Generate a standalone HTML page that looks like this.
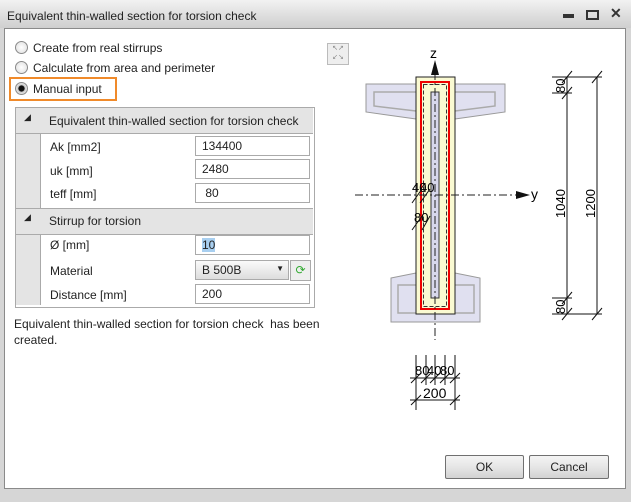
<!DOCTYPE html>
<html><head><style>
body{margin:0;width:631px;height:502px;background:#d6d6d6;font-family:"Liberation Sans",sans-serif;font-size:12px;color:#222;position:relative;overflow:hidden}
.abs{position:absolute}
.title{left:0;top:0;width:631px;height:28px;background:linear-gradient(#f2f2f2,#dcdcdc 60%,#cfcfcf);}
.client{left:4px;top:28px;width:620px;height:459px;background:#fff;border:1px solid #8a8a8a}
.radio{width:11px;height:11px;border-radius:50%;border:1px solid #8a8a8a;background:radial-gradient(#fff,#ddd)}
.inp{background:#fff;border:1px solid #aaa;height:20px;box-sizing:border-box;padding:2px 6px;font-size:12px}
.btn{border:1px solid #707070;border-radius:2px;background:linear-gradient(#f4f4f4,#e6e6e6 50%,#d2d2d2);text-align:center;line-height:22px;height:22px}
</style></head><body>
<div class="abs title"></div>
<div class="abs" style="left:7px;top:9px;font-size:12px">Equivalent thin-walled section for torsion check</div>
<div class="abs" style="left:563px;top:14px;width:11px;height:4px;background:#333"></div>
<div class="abs" style="left:586px;top:10px;width:9px;height:6px;border:2px solid #333"></div>
<div class="abs" style="left:610px;top:5px;font-weight:bold;font-size:14px;color:#333">✕</div>
<div class="abs client"></div>

<div class="abs radio" style="left:15px;top:41px"></div>
<div class="abs" style="left:33px;top:41px">Create from real stirrups</div>
<div class="abs radio" style="left:15px;top:61px"></div>
<div class="abs" style="left:33px;top:61px">Calculate from area and perimeter</div>
<div class="abs" style="left:9px;top:77px;width:104px;height:20px;border:2px solid #f08a2a"></div>
<div class="abs radio" style="left:15px;top:82px;background:radial-gradient(#111 35%,#ccc 45%,#fff)"></div>
<div class="abs" style="left:33px;top:82px">Manual input</div>

<div class="abs" style="left:15px;top:107px;width:298px;height:199px;border:1px solid #aaa;background:#fff"></div>
<div class="abs" style="left:16px;top:108px;width:24px;height:197px;background:#e4e4e4"></div>
<div class="abs" style="left:16px;top:108px;width:297px;height:25px;background:#e4e4e4;border-bottom:1px solid #aaa"></div>
<div class="abs" style="left:16px;top:208px;width:297px;height:25px;background:#e4e4e4;border-top:1px solid #aaa;border-bottom:1px solid #aaa"></div>
<div class="abs" style="left:40px;top:133px;width:1px;height:75px;background:#aaa"></div>
<div class="abs" style="left:40px;top:234px;width:1px;height:71px;background:#aaa"></div>
<div class="abs" style="left:24px;top:112px;font-size:9px">◢</div>
<div class="abs" style="left:24px;top:212px;font-size:9px">◢</div>
<div class="abs" style="left:49px;top:114px">Equivalent thin-walled section for torsion check</div>
<div class="abs" style="left:49px;top:214px">Stirrup for torsion</div>
<div class="abs" style="left:50px;top:140px">Ak [mm2]</div>
<div class="abs" style="left:50px;top:164px">uk [mm]</div>
<div class="abs" style="left:50px;top:187px">teff [mm]</div>
<div class="abs" style="left:50px;top:238px">Ø [mm]</div>
<div class="abs" style="left:50px;top:264px">Material</div>
<div class="abs" style="left:50px;top:288px">Distance [mm]</div>
<div class="abs inp" style="left:195px;top:136px;width:115px">134400</div>
<div class="abs inp" style="left:195px;top:159px;width:115px">2480</div>
<div class="abs inp" style="left:195px;top:183px;width:115px">&nbsp;80</div>
<div class="abs inp" style="left:195px;top:235px;width:115px"><span style="background:#a8cff0">10</span></div>
<div class="abs inp" style="left:195px;top:260px;width:94px;background:linear-gradient(#fafafa,#ddd)">B 500B<span style="position:absolute;right:4px;top:3px;font-size:8px">▼</span></div>
<div class="abs" style="left:290px;top:260px;width:19px;height:19px;border:1px solid #aaa;background:#eee;color:#3a3;text-align:center;line-height:19px">⟳</div>
<div class="abs inp" style="left:195px;top:284px;width:115px">200</div>
<div class="abs" style="left:14px;top:316px;line-height:16px">Equivalent thin-walled section for torsion check&nbsp; has been<br>created.</div>

<div class="abs" style="left:327px;top:43px;width:20px;height:20px;border:1px solid #bbb;background:#eee;font-size:7px;color:#888;line-height:9px;text-align:center">↖↗<br>↙↘</div>

<svg class="abs" style="left:0;top:0" width="631" height="502" font-family="Liberation Sans" font-size="14">
<path d="M366 84H505V112L455 119H416L366 112Z" fill="#e0e0f0" stroke="#999"/>
<path d="M374 92H495V106L455 111H416L374 106Z" fill="none" stroke="#aaa" stroke-width="1.5"/>
<path d="M391 278L416 273H455L480 278V322H391Z" fill="#e0e0f0" stroke="#999"/>
<path d="M398 285H474V313H398Z" fill="none" stroke="#aaa" stroke-width="1.5"/>
<rect x="416" y="77" width="39" height="237" fill="#fafad2" stroke="#222"/>
<rect x="421" y="82" width="28" height="227" fill="none" stroke="#e00" stroke-width="2"/>
<rect x="423.5" y="84.5" width="23" height="222" fill="none" stroke="#333" stroke-dasharray="4,2"/>
<rect x="431" y="92" width="8" height="206" fill="#d8d8ec" stroke="#333"/>
<path d="M435 72V340" stroke="#222" stroke-dasharray="8,3,2,3"/>
<path d="M431 75L435 60L439 75Z" fill="#111"/>
<text x="430" y="58" font-size="14">z</text>
<path d="M355 195H518" stroke="#222" stroke-dasharray="8,3,2,3"/>
<path d="M516 191L530 195L516 199Z" fill="#111"/>
<text x="531" y="199">y</text>
<text x="412" y="192" font-size="13">40</text><text x="420" y="192" font-size="13">40</text>
<text x="414" y="222" font-size="13">80</text>
<path d="M412 203L422 189M420 203L430 189M412 230L422 216M422 230L430 216" stroke="#111"/>
<g stroke="#111">
<path d="M552 77H602M552 93H572M552 298H572M552 314H602M567 77V314M597 77V314"/>
<path d="M562 83L572 71M562 99L572 87M562 304L572 292M562 320L572 308M592 83L602 71M592 320L602 308"/>
<path d="M416 355V410M426 355V385M435 355V385M445 355V385M455 355V410M410 378H460M410 400H460"/>
<path d="M411 383L421 373M421 383L431 373M430 383L440 373M440 383L450 373M450 383L460 373M411 405L421 395M450 405L460 395"/>
</g>
<text transform="translate(565,93) rotate(-90)" font-size="13">80</text>
<text transform="translate(565,314) rotate(-90)" font-size="13">80</text>
<text transform="translate(565,218) rotate(-90)" font-size="13">1040</text>
<text transform="translate(595,218) rotate(-90)" font-size="13">1200</text>
<text x="415" y="375" font-size="13">80</text><text x="427" y="375" font-size="13">40</text><text x="440" y="375" font-size="13">80</text>
<text x="423" y="398" font-size="14">200</text>
</svg>

<div class="abs btn" style="left:445px;top:455px;width:77px">OK</div>
<div class="abs btn" style="left:529px;top:455px;width:78px">Cancel</div>
</body></html>
